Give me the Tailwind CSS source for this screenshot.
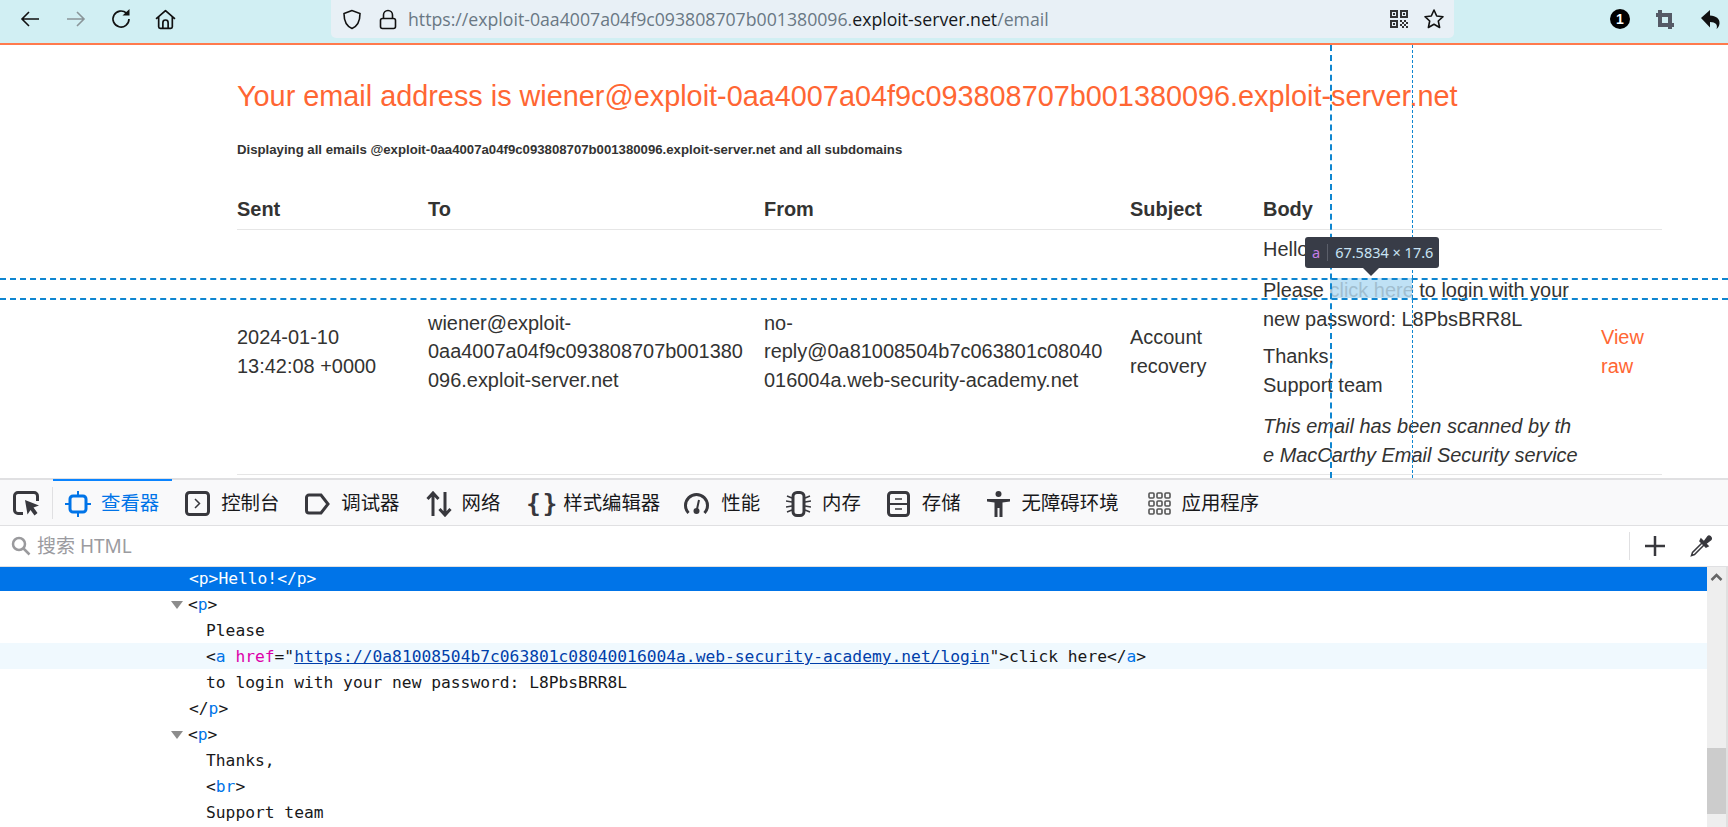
<!DOCTYPE html>
<html lang="en">
<head>
  <meta charset="UTF-8" />
  <title>Exploit server - email</title>
  <script src="https://cdn.jsdelivr.net/npm/@tailwindcss/browser@4"></script>
</head>
<body class="h-screen overflow-hidden flex flex-col bg-white font-['Liberation_Sans','Noto_Sans_CJK_SC',sans-serif]">

  <!-- browser toolbar -->
  <header class="h-[45px] shrink-0 flex bg-[#d1eff3] border-b-2 border-[#ff7a4d]">
    <div class="w-[331px] flex items-center pl-[20px] gap-[26px] h-[38px]">
      <svg class="w-[20px] h-[20px]" viewBox="0 0 20 20" fill="none" stroke="#111" stroke-width="1.6"><path d="M19 10H2M9 3l-7 7 7 7"/></svg>
      <svg class="w-[20px] h-[20px]" viewBox="0 0 20 20" fill="none" stroke="#8a9599" stroke-width="1.6"><path d="M1 10h17M11 3l7 7-7 7"/></svg>
      <svg class="w-[20px] h-[20px] -ml-[1px]" viewBox="0 0 20 20" fill="none" stroke="#111" stroke-width="1.7"><path d="M15.5 4.2A8 8 0 1 0 18 10"/><path d="M11.5 6.500H18.500V0z" fill="#111" stroke="none"/></svg>
      <svg class="w-[21px] h-[21px] -ml-[2px]" viewBox="0 0 20 20" fill="none" stroke="#111" stroke-width="1.6" stroke-linejoin="round"><path d="M1 9.500 10 1.500l9 8M3.500 7.500V17a1.500 1.500 0 0 0 1.500 1.500h10a1.500 1.500 0 0 0 1.500-1.500V7.500M7.500 18.500V13a2.500 2.500 0 0 1 5 0v5.500"/></svg>
    </div>
    <div class="w-[1123px] h-[38px] bg-[#e8f0f6] rounded-b-[5px] flex items-center pl-[11px]">
      <svg class="w-[20px] h-[21px]" viewBox="0 0 20 21" fill="none" stroke="#111" stroke-width="1.6"><path d="M10 1.500 2 4.500c0 7 2 12.500 8 15 6-2.500 8-8 8-15z"/></svg>
      <svg class="w-[18px] h-[21px] ml-[17px]" viewBox="0 0 18 21" fill="none" stroke="#111" stroke-width="1.6"><rect x="1.500" y="9.500" width="15" height="10" rx="2"/><path d="M4.500 9.500V6a4.500 4.500 0 0 1 9 0v3.500"/></svg>
      <div class="ml-[11px] w-[950px] text-[17.700px] text-[#6a7884] whitespace-nowrap font-['Open_Sans',sans-serif]">https://exploit-0aa4007a04f9c093808707b001380096.<span class="text-[#15181c]">exploit-server.net</span>/email</div>
      <svg class="w-[18px] h-[20px] absolute left-[1390px] top-[9px]" viewBox="0 0 18 18" fill="#333"><path d="M0 0h8v8H0zM2 2v4h4V2zM10 0h8v8h-8zM12 2v4h4V2zM0 10h8v8H0zM2 12v4h4v-4zM3 3h2v2H3zM13 3h2v2h-2zM3 13h2v2H3zM10 10h2v2h-2zM14 10h2v2h-2zM12 12h2v2h-2zM16 12h2v2h-2zM10 14h2v2h-2zM14 14h2v2h-2zM12 16h2v2h-2zM16 16h2v2h-2z"/></svg>
      <svg class="w-[22px] h-[22px] absolute left-[1423px] top-[8px]" viewBox="0 0 22 22" fill="none" stroke="#111" stroke-width="1.6" stroke-linejoin="round"><path d="m11 2 2.700 6 6.300.7-4.700 4.300 1.300 6.500L11 16.200 5.400 19.500 6.700 13 2 8.700 8.300 8z"/></svg>
    </div>
    <div class="flex-1 flex items-center h-[38px] pl-[156px] gap-[24px]">
      <div class="w-[20px] h-[20px] rounded-full bg-black text-white text-[14px] font-bold flex items-center justify-center">1</div>
      <svg class="w-[18px] h-[19px] ml-[2px]" viewBox="0 0 18 19" fill="none" stroke="#555a66" stroke-width="4"><path d="M0 5h14v14M4 0v15h14"/></svg>
      <svg class="w-[19px] h-[19px] ml-[3px]" viewBox="0 0 19 19" fill="#111"><path d="M9 0v5.500c6 .5 10 3 9.500 8-.2 2.500-1.500 4.500-3 5.500.8-2 .5-4-.5-5-1.200-1.300-3-1.800-6-2v5.500L0 8z"/></svg>
    </div>
  </header>

  <!-- page -->
  <main class="relative h-[433px] shrink-0 overflow-hidden pl-[237px] text-[#333332]">
    <h1 class="pt-[33px] text-[28.830px] leading-[36px] whitespace-nowrap text-[#ff6633]">Your email address is wiener@exploit-0aa4007a04f9c093808707b001380096.exploit-server.net</h1>
    <p class="mt-[28px] text-[13.200px] leading-[16px] font-bold">Displaying all emails @exploit-0aa4007a04f9c093808707b001380096.exploit-server.net and all subdomains</p>

    <table class="mt-[32px] w-[1425px] table-fixed border-collapse text-[19.950px] leading-[28.600px]">
      <colgroup>
        <col class="w-[191px]" /><col class="w-[336px]" /><col class="w-[366px]" /><col class="w-[133px]" /><col class="w-[338px]" /><col class="w-[61px]" />
      </colgroup>
      <thead>
        <tr class="border-b border-[#e6e6e6] text-left">
          <th class="h-[39px] font-bold">Sent</th>
          <th class="font-bold">To</th>
          <th class="font-bold">From</th>
          <th class="font-bold">Subject</th>
          <th class="font-bold" colspan="2">Body</th>
        </tr>
      </thead>
      <tbody>
        <tr class="border-b border-[#e6e6e6]">
          <td>2024-01-10<br />13:42:08 +0000</td>
          <td class="whitespace-nowrap">wiener@exploit-<br />0aa4007a04f9c093808707b001380<br />096.exploit-server.net</td>
          <td class="whitespace-nowrap">no-<br />reply@0a81008504b7c063801c08040<br />016004a.web-security-academy.net</td>
          <td>Account<br />recovery</td>
          <td class="pt-[5px] pb-[4px]">
            <p>Hello!</p>
            <p class="mt-[13px]">Please <span class="text-[#c2b8b3]">click here</span> to login with your<br />new password: L8PbsBRR8L</p>
            <p class="mt-[9px]">Thanks,<br />Support team</p>
            <p class="mt-[13px] italic whitespace-nowrap">This email has been scanned by th<br />e MacCarthy Email Security service</p>
          </td>
          <td class="text-[#ff6633]">View<br />raw</td>
        </tr>
      </tbody>
    </table>

    <!-- inspector highlight of the hovered link -->
    <div class="absolute left-[1330px] top-[233px] w-[82px] h-[20px] bg-[#7fc4ec]/50"></div>
    <div class="absolute left-0 right-0 top-[233px] border-t-2 border-dashed border-[#0f86d0]"></div>
    <div class="absolute left-0 right-0 top-[253px] border-t-2 border-dashed border-[#0f86d0]"></div>
    <div class="absolute top-0 bottom-0 left-[1330px] border-l-2 border-dashed border-[#0f86d0]"></div>
    <div class="absolute top-0 bottom-0 left-[1412px] border-l border-dashed border-[#0f86d0]"></div>
    <div class="absolute left-[1305px] top-[192px] w-[134px] h-[31px] rounded-[3px] bg-[#383c47] flex items-center pl-[7px] text-[14.500px] font-['Noto_Sans',sans-serif] text-[#c9e4f5] whitespace-nowrap">
      <span class="text-[#c77ee8]">a</span>
      <span class="mx-[7px] w-px h-[17px] bg-[#5b5f6a]"></span>
      <span>67.5834 × 17.6</span>
    </div>
    <div class="absolute left-[1363px] top-[223px] w-0 h-0 border-x-[8px] border-x-transparent border-t-[8px] border-t-[#383c47]"></div>
  </main>

  <!-- devtools -->
  <section class="relative flex-1 min-h-0 flex flex-col border-t-2 border-[#e0e0e2] text-[#18181a]">
    <nav class="h-[46px] shrink-0 flex items-stretch bg-[#f9f9fa] border-b border-[#e0e0e2] text-[19.400px] whitespace-nowrap">
      <div class="w-[53px] pl-[13px] flex items-center relative">
        <svg class="w-[26px] h-[26px]" viewBox="0 0 26 26" fill="none" stroke="#38383d" stroke-width="3"><path d="M10 23.500H5A3.500 3.500 0 0 1 1.500 20V6A3.500 3.500 0 0 1 5 2.500h16A3.500 3.500 0 0 1 24.500 6v5"/><path d="M12 10l14 5.500-5.500 2 4 5.500-3 2.500-4-5.500-3 4.500z" fill="#38383d" stroke="none"/></svg>
        <span class="absolute right-0 top-[7px] h-[32px] w-px bg-[#e0e0e2]"></span>
      </div>
      <div class="flex items-center gap-[10px] pl-[13px] pr-[13px] pt-[2px] border-t-2 -mt-px border-[#0a84ff] text-[#0074e8]">
        <svg class="w-[26px] h-[26px] -ml-[1px]" viewBox="0 0 26 26" fill="none" stroke="#0074e8" stroke-width="3"><rect x="5" y="5" width="16" height="16" rx="3"/><path d="M13 0v5M13 21v5M0 13h5M21 13h5" stroke-width="2"/></svg>
        <span>查看器</span>
      </div>
      <div class="flex items-center gap-[11px] px-[13px] pt-[2px]">
        <svg class="w-[25px] h-[25px]" viewBox="0 0 25 25" fill="none" stroke="#38383d" stroke-width="3"><rect x="1.500" y="1.500" width="22" height="22" rx="3"/><path d="m10 8 4.500 4.500L10 17" stroke-width="1.500"/></svg>
        <span>控制台</span>
      </div>
      <div class="flex items-center gap-[11px] px-[13px] pt-[2px]">
        <svg class="w-[25px] h-[22px]" viewBox="0 0 25 22" fill="none" stroke="#38383d" stroke-width="3"><path d="M4 2h12l7 9-7 9H4a2.500 2.500 0 0 1-2.500-2.500v-13A2.500 2.500 0 0 1 4 2z"/></svg>
        <span>调试器</span>
      </div>
      <div class="flex items-center gap-[10px] px-[13px] pt-[2px]">
        <svg class="w-[26px] h-[26px]" viewBox="0 0 26 26" fill="none" stroke="#38383d" stroke-width="3"><path d="M7 25V2M1.500 8 7 2l5.500 6M19 1v23M13.500 18l5.500 6 5.500-6"/></svg>
        <span>网络</span>
      </div>
      <div class="flex items-center gap-[11px] pl-[13px] pr-[11px] pt-[2px]">
        <span class="w-[26px] text-center text-[24px] leading-none font-bold tracking-[2px] whitespace-nowrap text-[#38383d] font-['DejaVu_Sans_Mono',monospace]">{}</span>
        <span>样式编辑器</span>
      </div>
      <div class="flex items-center gap-[12px] px-[13px] pt-[2px]">
        <svg class="w-[25px] h-[25px]" viewBox="0 0 25 25" fill="none" stroke="#38383d" stroke-width="3"><path d="M4.500 22A11 11 0 1 1 20.500 22"/><path d="m15 9-2 9" stroke-width="2"/><circle cx="12.500" cy="20" r="3" fill="#38383d" stroke="none"/></svg>
        <span>性能</span>
      </div>
      <div class="flex items-center gap-[11px] px-[13px] pt-[2px]">
        <svg class="w-[25px] h-[26px]" viewBox="0 0 25 26" fill="none" stroke="#38383d" stroke-width="2"><rect x="7" y="1.500" width="11" height="23" rx="4" stroke-width="3"/><path d="M1 5l5 2M0 10l6 1M0 16l6-1M1 21l5-2M24 5l-5 2M25 10l-6 1M25 16l-6-1M24 21l-5-2" stroke-width="1.500"/></svg>
        <span>内存</span>
      </div>
      <div class="flex items-center gap-[12px] px-[13px] pt-[2px]">
        <svg class="w-[23px] h-[26px]" viewBox="0 0 23 26" fill="none" stroke="#38383d" stroke-width="3"><rect x="1.500" y="1.500" width="20" height="23" rx="3"/><path d="M1.500 13h20" stroke-width="2"/><path d="M8 8h7M8 18h7" stroke-width="1.500"/></svg>
        <span>存储</span>
      </div>
      <div class="flex items-center gap-[12px] pl-[13px] pr-[16px] pt-[2px]">
        <svg class="w-[23px] h-[26px]" viewBox="0 0 23 26" fill="#38383d"><circle cx="11.500" cy="3" r="3"/><path d="M0 8h23v2.500l-7.500 1V26h-3v-9h-2v9h-3V11.500L0 10.500z"/></svg>
        <span>无障碍环境</span>
      </div>
      <div class="flex items-center gap-[11px] px-[13px] pt-[2px]">
        <svg class="w-[23px] h-[23px]" viewBox="0 0 23 23" fill="none" stroke="#555" stroke-width="1.600"><rect x="1" y="1" width="5" height="5" rx="1"/><rect x="9" y="1" width="5" height="5" rx="1"/><rect x="17" y="1" width="5" height="5" rx="1"/><rect x="1" y="9" width="5" height="5" rx="1"/><rect x="9" y="9" width="5" height="5" rx="1"/><rect x="17" y="9" width="5" height="5" rx="1"/><rect x="1" y="17" width="5" height="5" rx="1"/><rect x="9" y="17" width="5" height="5" rx="1"/><rect x="17" y="17" width="5" height="5" rx="1"/></svg>
        <span>应用程序</span>
      </div>
    </nav>

    <div class="h-[41px] shrink-0 flex items-center border-b border-[#e0e0e2] pl-[11px]">
      <svg class="w-[20px] h-[20px]" viewBox="0 0 20 20" fill="none" stroke="#9a9a9d" stroke-width="2.500"><circle cx="8" cy="8" r="6"/><path d="m12.500 12.500 6 6"/></svg>
      <span class="ml-[6px] flex-1 text-[19px] text-[#9b9ba0] font-['Noto_Sans','Noto_Sans_CJK_SC',sans-serif]">搜索 HTML</span>
      <span class="w-px h-[28px] bg-[#e0e0e2]"></span>
      <svg class="w-[20px] h-[20px] ml-[15px]" viewBox="0 0 20 20" stroke="#38383d" stroke-width="2.500"><path d="M0 10h20M10 0v20"/></svg>
      <svg class="w-[22px] h-[22px] ml-[25px] mr-[16px]" viewBox="0 0 22 22" fill="none" stroke="#38383d" stroke-width="1.500"><path d="M13 7 2.500 17.500 1.500 20.500 4.500 19.500 15 9"/><path d="m11 4 7 7-2 1-6-6zM14 7l4-5.500c1-1 2.500 0 3 1s.5 1.500-.5 2.500L15 9z" fill="#38383d"/></svg>
    </div>

    <div class="flex-1 min-h-0 flex overflow-hidden font-['DejaVu_Sans_Mono',monospace] text-[16.270px] whitespace-nowrap">
      <div class="flex-1 min-w-0">
        <div class="h-[24px] leading-[24px] pl-[189px] bg-[#0074e8] text-white">&lt;p&gt;Hello!&lt;/p&gt;</div>
        <div class="h-[26px] pt-[2px] pl-[171px] flex items-center">
          <span class="w-0 h-0 mr-[5px] border-x-[6.500px] border-x-transparent border-t-[8px] border-t-[#8c8c8c]"></span><span>&lt;<span class="text-[#0074e8]">p</span>&gt;</span>
        </div>
        <div class="h-[26px] leading-[28px] pl-[206px]">Please</div>
        <div class="h-[26px] leading-[28px] pl-[206px] bg-[#f0f9fe]">&lt;<span class="text-[#0074e8]">a</span> <span class="text-[#dd00a9]">href</span>="<span class="text-[#003eaa] underline">https://0a81008504b7c063801c08040016004a.web-security-academy.net/login</span>"&gt;click here&lt;/<span class="text-[#0074e8]">a</span>&gt;</div>
        <div class="h-[26px] leading-[28px] pl-[206px]">to login with your new password: L8PbsBRR8L</div>
        <div class="h-[26px] leading-[28px] pl-[189px]">&lt;/<span class="text-[#0074e8]">p</span>&gt;</div>
        <div class="h-[26px] pt-[2px] pl-[171px] flex items-center">
          <span class="w-0 h-0 mr-[5px] border-x-[6.500px] border-x-transparent border-t-[8px] border-t-[#8c8c8c]"></span><span>&lt;<span class="text-[#0074e8]">p</span>&gt;</span>
        </div>
        <div class="h-[26px] leading-[28px] pl-[206px]">Thanks,</div>
        <div class="h-[26px] leading-[28px] pl-[206px]">&lt;<span class="text-[#0074e8]">br</span>&gt;</div>
        <div class="h-[26px] leading-[28px] pl-[206px]">Support team</div>
      </div>
      <!-- scrollbar -->
      <div class="w-[21px] shrink-0 flex flex-col bg-[#eeeeee] border-r-2 border-[#e0e0e0]">
        <svg class="w-[19px] h-[21px] shrink-0" viewBox="0 0 19 21" fill="none" stroke="#666" stroke-width="2.500"><path d="m4.500 13 5-5 5 5"/></svg>
        <div class="mt-[160px] h-[66px] bg-[#cccccc]"></div>
      </div>
    </div>
  </section>
</body>
</html>
